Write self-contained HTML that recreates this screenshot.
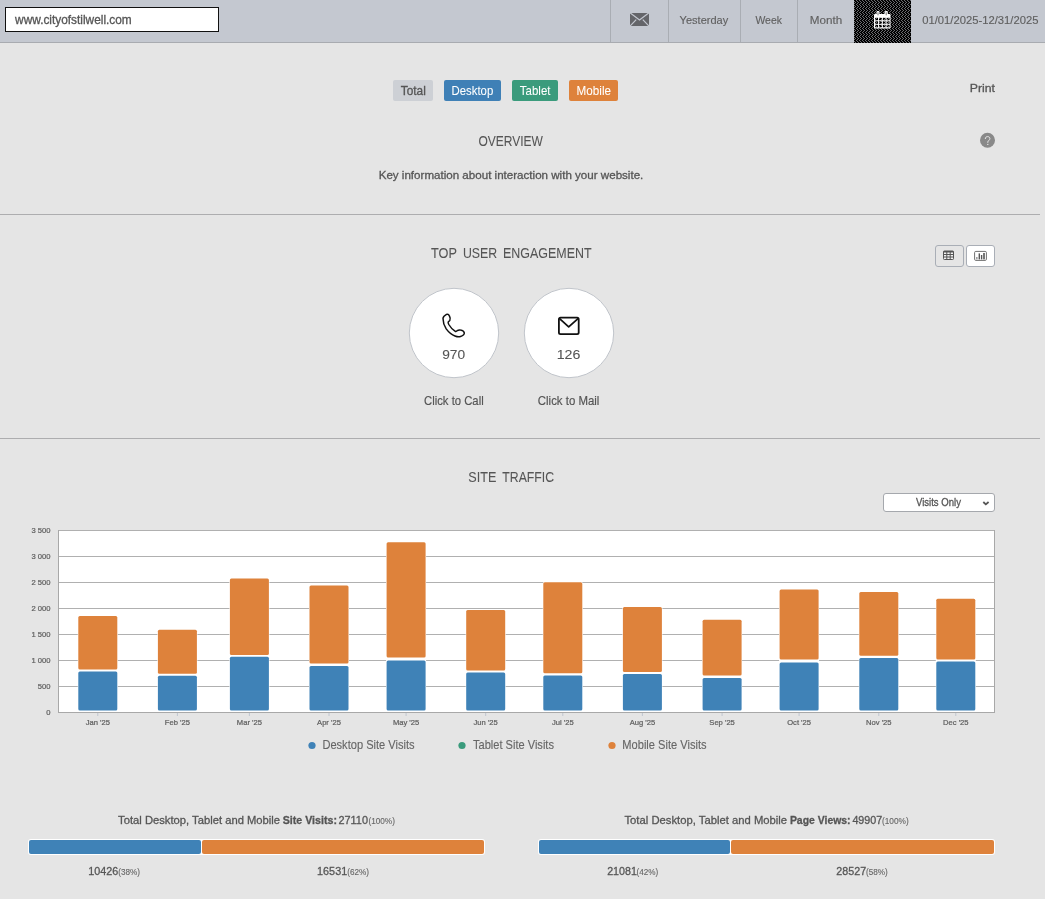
<!DOCTYPE html>
<html><head><meta charset="utf-8"><title>Dashboard</title>
<style>
html,body{margin:0;padding:0;}
body{width:1045px;height:899px;overflow:hidden;background:#e5e5e5;position:relative;font-family:"Liberation Sans", sans-serif;}
svg text{font-family:"Liberation Sans", sans-serif;}
</style></head><body>
<div style="position:absolute;left:0px;top:0px;width:1045px;height:42px;background:#c4c8d0"></div>
<div style="position:absolute;left:0px;top:42px;width:1045px;height:1px;background:#a8abb0"></div>
<div style="position:absolute;left:5px;top:7px;width:214px;height:25px;background:#fff;border:1px solid #111;box-sizing:border-box"></div>
<div style="position:absolute;left:610px;top:0px;width:1px;height:42px;background:#a9adb3"></div>
<div style="position:absolute;left:668px;top:0px;width:1px;height:42px;background:#a9adb3"></div>
<div style="position:absolute;left:740px;top:0px;width:1px;height:42px;background:#a9adb3"></div>
<div style="position:absolute;left:797px;top:0px;width:1px;height:42px;background:#a9adb3"></div>
<div style="position:absolute;left:393px;top:80px;width:40px;height:21px;background:#cdd0d5;border-radius:2px"></div>
<div style="position:absolute;left:444px;top:80px;width:57px;height:21px;background:#3f80b6;border-radius:2px"></div>
<div style="position:absolute;left:512px;top:80px;width:46px;height:21px;background:#3a9b7c;border-radius:2px"></div>
<div style="position:absolute;left:569px;top:80px;width:49px;height:21px;background:#de823b;border-radius:2px"></div>
<div style="position:absolute;left:0px;top:214px;width:1040px;height:1px;background:#adadaf"></div>
<div style="position:absolute;left:935px;top:245px;width:29px;height:22px;border:1px solid #a9aeb6;border-radius:3px;box-sizing:border-box"></div>
<div style="position:absolute;left:966px;top:245px;width:29px;height:22px;background:#fff;border:1px solid #a9aeb6;border-radius:3px;box-sizing:border-box"></div>
<div style="position:absolute;left:0px;top:438px;width:1040px;height:1px;background:#adadaf"></div>
<div style="position:absolute;left:883px;top:493px;width:112px;height:19px;background:#fff;border:1px solid #a5a8ad;border-radius:3px;box-sizing:border-box"></div>
<svg width="1045" height="899" viewBox="0 0 1045 899" style="position:absolute;left:0;top:0;will-change:transform">
<text transform="translate(15.10 24.1) scale(0.9894 1)" font-size="12.00" fill="#555" stroke="#555" stroke-width="0.3">www.cityofstilwell.com</text>
<rect x="630" y="13" width="19" height="13" fill="#646569"/>
<path d="M630 12.8 L639.5 20 L649 12.8" stroke="#c4c8d0" stroke-width="1.2" fill="none"/>
<path d="M630 26.2 L636.2 19.6 M649 26.2 L642.8 19.6" stroke="#c4c8d0" stroke-width="1.2" fill="none"/>
<text transform="translate(679.62 24) scale(0.9500 1)" font-size="11.59" fill="#606060" stroke="#606060" stroke-width="0.15">Yesterday</text>
<text transform="translate(755.45 23.8) scale(0.9016 1)" font-size="11.59" fill="#606060" stroke="#606060" stroke-width="0.15">Week</text>
<text transform="translate(809.86 24) scale(1.0082 1)" font-size="11.59" fill="#606060" stroke="#606060" stroke-width="0.15">Month</text>
<defs><pattern id="dith" width="3" height="4" patternUnits="userSpaceOnUse"><rect width="3" height="4" fill="#000"/><rect x="1" y="0" width="1" height="1" fill="#6c6d71"/><rect x="2" y="1" width="1" height="1" fill="#6c6d71"/><rect x="0" y="2" width="1" height="1" fill="#6c6d71"/><rect x="2" y="3" width="1" height="1" fill="#6c6d71"/></pattern></defs><rect x="854" y="0" width="57" height="43" fill="url(#dith)"/>
<g fill="#fff"><rect x="874" y="14" width="16.5" height="14.6" rx="1"/><rect x="876.5" y="11" width="3" height="5" rx="1.2"/><rect x="884.7" y="11" width="3" height="5" rx="1.2"/></g><rect x="877.5" y="12.3" width="1" height="3" fill="#777"/><rect x="885.7" y="12.3" width="1" height="3" fill="#777"/>
<g fill="url(#dith)"><rect x="875.10" y="17.80" width="2.9" height="2.5"/><rect x="878.95" y="17.80" width="2.9" height="2.5"/><rect x="882.80" y="17.80" width="2.9" height="2.5"/><rect x="886.65" y="17.80" width="2.9" height="2.5"/><rect x="875.10" y="21.30" width="2.9" height="2.5"/><rect x="878.95" y="21.30" width="2.9" height="2.5"/><rect x="882.80" y="21.30" width="2.9" height="2.5"/><rect x="886.65" y="21.30" width="2.9" height="2.5"/><rect x="875.10" y="24.80" width="2.9" height="2.5"/><rect x="878.95" y="24.80" width="2.9" height="2.5"/><rect x="882.80" y="24.80" width="2.9" height="2.5"/><rect x="886.65" y="24.80" width="2.9" height="2.5"/></g>
<text transform="translate(922.25 23.9) scale(0.9593 1)" font-size="11.71" fill="#606060" stroke="#606060" stroke-width="0.15">01/01/2025-12/31/2025</text>
<text transform="translate(400.76 95) scale(0.9853 1)" font-size="12.03" fill="#555" stroke="#555" stroke-width="0.3">Total</text>
<text transform="translate(451.49 95) scale(0.9474 1)" font-size="12.03" fill="#fff" stroke="#fff" stroke-width="0.05">Desktop</text>
<text transform="translate(519.87 95) scale(0.9541 1)" font-size="12.03" fill="#fff" stroke="#fff" stroke-width="0.05">Tablet</text>
<text transform="translate(576.56 95) scale(0.9728 1)" font-size="12.03" fill="#fff" stroke="#fff" stroke-width="0.05">Mobile</text>
<text transform="translate(478.46 146) scale(0.8293 1)" font-size="14.49" fill="#555" stroke="#555" stroke-width="0.06">OVERVIEW</text>
<text transform="translate(378.67 178.7) scale(1.0011 1)" font-size="11.59" fill="#555" stroke="#555" stroke-width="0.3">Key information about interaction with your website.</text>
<text transform="translate(969.72 91.9) scale(1.0595 1)" font-size="11.59" fill="#555" stroke="#555" stroke-width="0.3">Print</text>
<circle cx="987.5" cy="140.2" r="7.5" fill="#898989"/>
<path d="M985.3 139 C985.3 137.3 986.3 136.6 987.6 136.6 C988.9 136.6 989.9 137.4 989.9 138.6 C989.9 140.3 987.8 140.5 987.8 142.2 L987.8 142.8" stroke="#eee" stroke-width="0.95" fill="none"/>
<rect x="987.25" y="143.9" width="1.1" height="1.1" fill="#eee"/>
<text transform="translate(430.95 258.1) scale(0.8523 1)" font-size="14.93" fill="#555" stroke="#555" stroke-width="0.06">TOP</text>
<text transform="translate(462.98 258.1) scale(0.8251 1)" font-size="14.93" fill="#555" stroke="#555" stroke-width="0.06">USER</text>
<text transform="translate(503.00 258.1) scale(0.8352 1)" font-size="14.93" fill="#555" stroke="#555" stroke-width="0.06">ENGAGEMENT</text>
<rect x="943.5" y="251" width="10" height="8.5" fill="#f2f2f2"/><g fill="none" stroke="#555" stroke-width="1"><rect x="943.5" y="251" width="10" height="8.5" rx="0.8"/><line x1="943.5" y1="254.5" x2="953.5" y2="254.5"/><line x1="943.5" y1="257" x2="953.5" y2="257"/><line x1="946.8" y1="251" x2="946.8" y2="259.5"/><line x1="950.2" y1="251" x2="950.2" y2="259.5"/></g><rect x="943.5" y="251" width="10" height="1.5" fill="#555"/>
<g fill="none" stroke="#707070" stroke-width="1"><rect x="974.6" y="251.4" width="11.8" height="9" rx="1.2"/></g><g fill="#555"><rect x="976.2" y="257" width="1.3" height="2.4" fill="#888"/><rect x="978.6" y="253.4" width="1.4" height="6"/><rect x="980.9" y="255" width="1.4" height="4.4"/><rect x="983.2" y="253" width="1.6" height="6.4"/></g>
<circle cx="454" cy="333" r="44.7" fill="#fff" stroke="#c0c4ca" stroke-width="1"/>
<circle cx="569" cy="333" r="44.7" fill="#fff" stroke="#c0c4ca" stroke-width="1"/>
<path transform="translate(438 310)" d="M8.5 4.3 C6.5 5.5 5 6.8 5 8.5 C5 12 6 15.5 8.2 18.9 C10.5 22 13.5 24.8 17 26 C19 26.8 21 27 22.5 26.5 C24.5 25.8 26.5 24.5 26.3 22.8 C26 21.3 24.5 20.3 22.5 20 C20.8 19.7 19.8 20.2 19.3 20.6 L17.6 21.6 C15 20 12.5 17.5 10.8 14.5 C10.2 13.2 10 12.5 10.2 12 L11.8 10.5 C12.4 9.5 12.2 7.5 11.5 6.2 C10.7 4.5 9.5 3.8 8.5 4.3 Z" fill="none" stroke="#111" stroke-width="1.5" stroke-linejoin="round"/>
<g transform="translate(553 310)" fill="none" stroke="#111" stroke-width="1.8" stroke-linejoin="round"><rect x="5.9" y="7.7" width="19.8" height="16.4" rx="1.6"/><path d="M6.3 8.4 L15.7 16.9 L25.3 8.4"/></g>
<text transform="translate(442.18 358.7) scale(1.0465 1)" font-size="13.14" fill="#555" stroke="#555" stroke-width="0.08">970</text>
<text transform="translate(556.74 358.7) scale(1.0799 1)" font-size="13.14" fill="#555" stroke="#555" stroke-width="0.08">126</text>
<text transform="translate(424.04 405) scale(0.9172 1)" font-size="12.32" fill="#555" stroke="#555" stroke-width="0.18">Click to Call</text>
<text transform="translate(537.83 405) scale(0.9280 1)" font-size="12.32" fill="#555" stroke="#555" stroke-width="0.18">Click to Mail</text>
<text transform="translate(468.33 482.1) scale(0.8694 1)" font-size="14.49" fill="#555" stroke="#555" stroke-width="0.06">SITE</text>
<text transform="translate(502.35 482.1) scale(0.8466 1)" font-size="14.49" fill="#555" stroke="#555" stroke-width="0.06">TRAFFIC</text>
<text transform="translate(915.95 506.1) scale(0.8928 1)" font-size="10.72" fill="#555" stroke="#555" stroke-width="0.3">Visits Only</text>
<path d="M983.3 502 L985.8 504.4 L988.6 502" stroke="#555" stroke-width="1.8" fill="none"/>
<rect x="58" y="530" width="936" height="182" fill="#fff"/>
<line x1="58" y1="530.5" x2="994" y2="530.5" stroke="#b0b0b0" stroke-width="1"/>
<text x="50.5" y="533" font-size="7.6" fill="#606060" stroke="#606060" stroke-width="0.22" text-anchor="end">3 500</text>
<line x1="58" y1="556.5" x2="994" y2="556.5" stroke="#b0b0b0" stroke-width="1"/>
<text x="50.5" y="559" font-size="7.6" fill="#606060" stroke="#606060" stroke-width="0.22" text-anchor="end">3 000</text>
<line x1="58" y1="582.5" x2="994" y2="582.5" stroke="#b0b0b0" stroke-width="1"/>
<text x="50.5" y="585" font-size="7.6" fill="#606060" stroke="#606060" stroke-width="0.22" text-anchor="end">2 500</text>
<line x1="58" y1="608.5" x2="994" y2="608.5" stroke="#b0b0b0" stroke-width="1"/>
<text x="50.5" y="611" font-size="7.6" fill="#606060" stroke="#606060" stroke-width="0.22" text-anchor="end">2 000</text>
<line x1="58" y1="634.5" x2="994" y2="634.5" stroke="#b0b0b0" stroke-width="1"/>
<text x="50.5" y="637" font-size="7.6" fill="#606060" stroke="#606060" stroke-width="0.22" text-anchor="end">1 500</text>
<line x1="58" y1="660.5" x2="994" y2="660.5" stroke="#b0b0b0" stroke-width="1"/>
<text x="50.5" y="663" font-size="7.6" fill="#606060" stroke="#606060" stroke-width="0.22" text-anchor="end">1 000</text>
<line x1="58" y1="686.5" x2="994" y2="686.5" stroke="#b0b0b0" stroke-width="1"/>
<text x="50.5" y="689" font-size="7.6" fill="#606060" stroke="#606060" stroke-width="0.22" text-anchor="end">500</text>
<line x1="58" y1="712.5" x2="994" y2="712.5" stroke="#b0b0b0" stroke-width="1"/>
<text x="50.5" y="715" font-size="7.6" fill="#606060" stroke="#606060" stroke-width="0.22" text-anchor="end">0</text>
<line x1="58.5" y1="530" x2="58.5" y2="712" stroke="#a8a8a8" stroke-width="1"/>
<line x1="994.5" y1="530" x2="994.5" y2="713" stroke="#a8a8a8" stroke-width="1"/>
<line x1="58" y1="712.5" x2="995" y2="712.5" stroke="#a8a8a8" stroke-width="1"/>
<rect x="77.8" y="615.5" width="40" height="96.5" fill="#fff" rx="2"/>
<rect x="78.3" y="616.0" width="39" height="53.5" fill="#de823b" rx="1.5"/>
<rect x="78.3" y="671.6" width="39" height="39.0" fill="#3f82b7" rx="1.5"/>
<line x1="97.8" y1="713" x2="97.8" y2="716" stroke="#bfc6d0" stroke-width="1"/>
<text x="97.8" y="725" font-size="7.6" fill="#606060" stroke="#606060" stroke-width="0.22" text-anchor="middle">Jan '25</text>
<rect x="157.4" y="629.2" width="40" height="82.8" fill="#fff" rx="2"/>
<rect x="157.9" y="629.7" width="39" height="44.0" fill="#de823b" rx="1.5"/>
<rect x="157.9" y="675.8" width="39" height="34.8" fill="#3f82b7" rx="1.5"/>
<line x1="177.4" y1="713" x2="177.4" y2="716" stroke="#bfc6d0" stroke-width="1"/>
<text x="177.4" y="725" font-size="7.6" fill="#606060" stroke="#606060" stroke-width="0.22" text-anchor="middle">Feb '25</text>
<rect x="229.4" y="578.1" width="40" height="133.9" fill="#fff" rx="2"/>
<rect x="229.9" y="578.6" width="39" height="76.5" fill="#de823b" rx="1.5"/>
<rect x="229.9" y="656.8" width="39" height="53.8" fill="#3f82b7" rx="1.5"/>
<line x1="249.4" y1="713" x2="249.4" y2="716" stroke="#bfc6d0" stroke-width="1"/>
<text x="249.4" y="725" font-size="7.6" fill="#606060" stroke="#606060" stroke-width="0.22" text-anchor="middle">Mar '25</text>
<rect x="309.0" y="584.9" width="40" height="127.1" fill="#fff" rx="2"/>
<rect x="309.5" y="585.4" width="39" height="78.2" fill="#de823b" rx="1.5"/>
<rect x="309.5" y="665.9" width="39" height="44.7" fill="#3f82b7" rx="1.5"/>
<line x1="329.0" y1="713" x2="329.0" y2="716" stroke="#bfc6d0" stroke-width="1"/>
<text x="329.0" y="725" font-size="7.6" fill="#606060" stroke="#606060" stroke-width="0.22" text-anchor="middle">Apr '25</text>
<rect x="386.1" y="541.8" width="40" height="170.2" fill="#fff" rx="2"/>
<rect x="386.6" y="542.3" width="39" height="115.1" fill="#de823b" rx="1.5"/>
<rect x="386.6" y="660.4" width="39" height="50.2" fill="#3f82b7" rx="1.5"/>
<line x1="406.1" y1="713" x2="406.1" y2="716" stroke="#bfc6d0" stroke-width="1"/>
<text x="406.1" y="725" font-size="7.6" fill="#606060" stroke="#606060" stroke-width="0.22" text-anchor="middle">May '25</text>
<rect x="465.7" y="609.4" width="40" height="102.6" fill="#fff" rx="2"/>
<rect x="466.2" y="609.9" width="39" height="60.6" fill="#de823b" rx="1.5"/>
<rect x="466.2" y="672.6" width="39" height="38.0" fill="#3f82b7" rx="1.5"/>
<line x1="485.7" y1="713" x2="485.7" y2="716" stroke="#bfc6d0" stroke-width="1"/>
<text x="485.7" y="725" font-size="7.6" fill="#606060" stroke="#606060" stroke-width="0.22" text-anchor="middle">Jun '25</text>
<rect x="542.8" y="581.7" width="40" height="130.3" fill="#fff" rx="2"/>
<rect x="543.3" y="582.2" width="39" height="91.1" fill="#de823b" rx="1.5"/>
<rect x="543.3" y="675.4" width="39" height="35.2" fill="#3f82b7" rx="1.5"/>
<line x1="562.8" y1="713" x2="562.8" y2="716" stroke="#bfc6d0" stroke-width="1"/>
<text x="562.8" y="725" font-size="7.6" fill="#606060" stroke="#606060" stroke-width="0.22" text-anchor="middle">Jul '25</text>
<rect x="622.4" y="606.6" width="40" height="105.4" fill="#fff" rx="2"/>
<rect x="622.9" y="607.1" width="39" height="64.9" fill="#de823b" rx="1.5"/>
<rect x="622.9" y="674.1" width="39" height="36.5" fill="#3f82b7" rx="1.5"/>
<line x1="642.4" y1="713" x2="642.4" y2="716" stroke="#bfc6d0" stroke-width="1"/>
<text x="642.4" y="725" font-size="7.6" fill="#606060" stroke="#606060" stroke-width="0.22" text-anchor="middle">Aug '25</text>
<rect x="702.1" y="619.3" width="40" height="92.7" fill="#fff" rx="2"/>
<rect x="702.6" y="619.8" width="39" height="55.6" fill="#de823b" rx="1.5"/>
<rect x="702.6" y="677.9" width="39" height="32.7" fill="#3f82b7" rx="1.5"/>
<line x1="722.1" y1="713" x2="722.1" y2="716" stroke="#bfc6d0" stroke-width="1"/>
<text x="722.1" y="725" font-size="7.6" fill="#606060" stroke="#606060" stroke-width="0.22" text-anchor="middle">Sep '25</text>
<rect x="779.1" y="589.1" width="40" height="122.9" fill="#fff" rx="2"/>
<rect x="779.6" y="589.6" width="39" height="69.9" fill="#de823b" rx="1.5"/>
<rect x="779.6" y="662.5" width="39" height="48.1" fill="#3f82b7" rx="1.5"/>
<line x1="799.1" y1="713" x2="799.1" y2="716" stroke="#bfc6d0" stroke-width="1"/>
<text x="799.1" y="725" font-size="7.6" fill="#606060" stroke="#606060" stroke-width="0.22" text-anchor="middle">Oct '25</text>
<rect x="858.8" y="591.4" width="40" height="120.6" fill="#fff" rx="2"/>
<rect x="859.3" y="591.9" width="39" height="63.8" fill="#de823b" rx="1.5"/>
<rect x="859.3" y="657.9" width="39" height="52.7" fill="#3f82b7" rx="1.5"/>
<line x1="878.8" y1="713" x2="878.8" y2="716" stroke="#bfc6d0" stroke-width="1"/>
<text x="878.8" y="725" font-size="7.6" fill="#606060" stroke="#606060" stroke-width="0.22" text-anchor="middle">Nov '25</text>
<rect x="935.8" y="598.2" width="40" height="113.8" fill="#fff" rx="2"/>
<rect x="936.3" y="598.7" width="39" height="60.8" fill="#de823b" rx="1.5"/>
<rect x="936.3" y="661.4" width="39" height="49.2" fill="#3f82b7" rx="1.5"/>
<line x1="955.8" y1="713" x2="955.8" y2="716" stroke="#bfc6d0" stroke-width="1"/>
<text x="955.8" y="725" font-size="7.6" fill="#606060" stroke="#606060" stroke-width="0.22" text-anchor="middle">Dec '25</text>
<circle cx="312" cy="745.5" r="3.6" fill="#3f82b7"/>
<text transform="translate(322.41 749.3) scale(0.9220 1)" font-size="12.03" fill="#666" stroke="#666" stroke-width="0.12">Desktop Site Visits</text>
<circle cx="462" cy="745.5" r="3.6" fill="#3a9b7c"/>
<text transform="translate(472.98 749.3) scale(0.9212 1)" font-size="12.03" fill="#666" stroke="#666" stroke-width="0.12">Tablet Site Visits</text>
<circle cx="612" cy="745.5" r="3.6" fill="#de823b"/>
<text transform="translate(622.31 749.3) scale(0.9236 1)" font-size="12.03" fill="#666" stroke="#666" stroke-width="0.12">Mobile Site Visits</text>
<rect x="28" y="839" width="457" height="16" rx="3" fill="#fff"/>
<rect x="29" y="840" width="172" height="14" rx="2" fill="#3f82b7"/>
<rect x="202" y="840" width="282" height="14" rx="2" fill="#de823b"/>
<rect x="538" y="839" width="457" height="16" rx="3" fill="#fff"/>
<rect x="539" y="840" width="191" height="14" rx="2" fill="#3f82b7"/>
<rect x="731" y="840" width="263" height="14" rx="2" fill="#de823b"/>
<text transform="translate(118.08 823.8) scale(0.9687 1)" font-size="11.59" fill="#555" stroke="#555" stroke-width="0.3">Total Desktop, Tablet and Mobile</text>
<text transform="translate(282.68 823.8) scale(0.9207 1)" font-size="11.59" fill="#555" font-weight="bold" stroke="#555" stroke-width="0.3">Site Visits:</text>
<text transform="translate(338.45 823.8) scale(0.9552 1)" font-size="11.43" fill="#555" stroke="#555" stroke-width="0.3">27110</text>
<text transform="translate(368.41 823.8) scale(0.9287 1)" font-size="8.86" fill="#666" stroke="#666" stroke-width="0.12">(100%)</text>
<text transform="translate(624.47 823.8) scale(0.9729 1)" font-size="11.59" fill="#555" stroke="#555" stroke-width="0.3">Total Desktop, Tablet and Mobile</text>
<text transform="translate(789.92 823.8) scale(0.8999 1)" font-size="11.59" fill="#555" font-weight="bold" stroke="#555" stroke-width="0.3">Page Views:</text>
<text transform="translate(852.39 823.8) scale(0.9396 1)" font-size="11.43" fill="#555" stroke="#555" stroke-width="0.3">49907</text>
<text transform="translate(882.00 823.8) scale(0.9360 1)" font-size="8.86" fill="#666" stroke="#666" stroke-width="0.12">(100%)</text>
<text transform="translate(88.19 875.0) scale(0.9225 1)" font-size="11.71" fill="#555" stroke="#555" stroke-width="0.3">10426</text>
<text transform="translate(118.31 875.0) scale(0.9379 1)" font-size="8.71" fill="#666" stroke="#666" stroke-width="0.12">(38%)</text>
<text transform="translate(317.09 875.0) scale(0.9243 1)" font-size="11.71" fill="#555" stroke="#555" stroke-width="0.3">16531</text>
<text transform="translate(347.31 875.0) scale(0.9379 1)" font-size="8.71" fill="#666" stroke="#666" stroke-width="0.12">(62%)</text>
<text transform="translate(607.16 875.0) scale(0.9157 1)" font-size="11.71" fill="#555" stroke="#555" stroke-width="0.3">21081</text>
<text transform="translate(636.51 875.0) scale(0.9379 1)" font-size="8.71" fill="#666" stroke="#666" stroke-width="0.12">(42%)</text>
<text transform="translate(836.36 875.0) scale(0.9174 1)" font-size="11.71" fill="#555" stroke="#555" stroke-width="0.3">28527</text>
<text transform="translate(866.01 875.0) scale(0.9379 1)" font-size="8.71" fill="#666" stroke="#666" stroke-width="0.12">(58%)</text>
</svg>
</body></html>
